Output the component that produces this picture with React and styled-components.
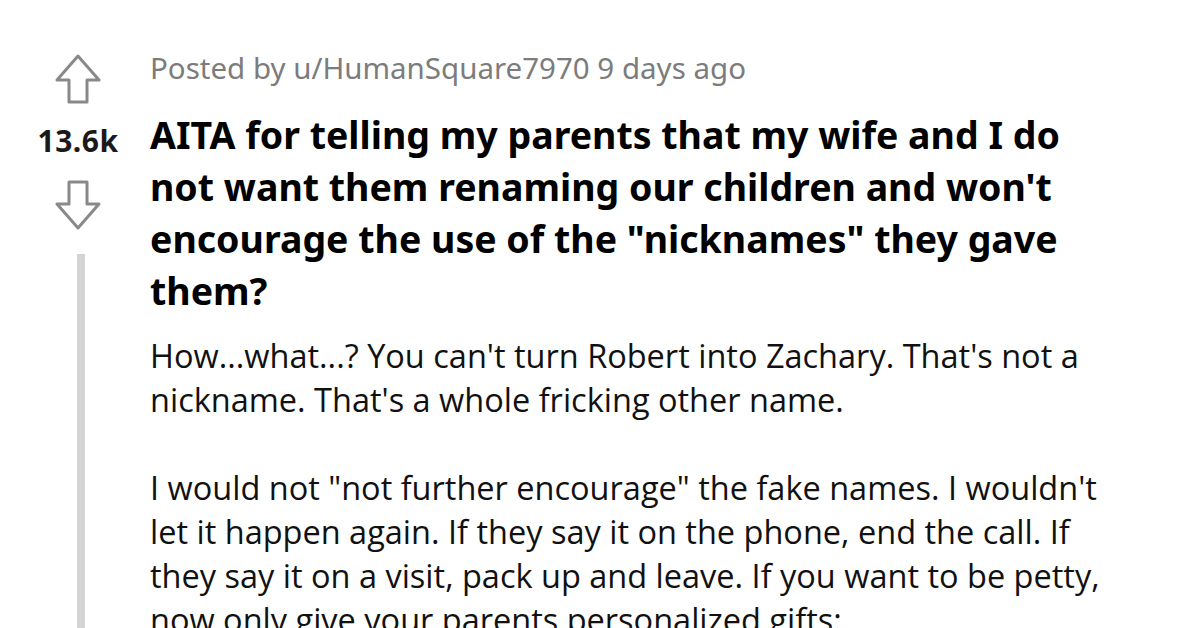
import React from 'react';
import styled, { createGlobalStyle } from 'styled-components';

const GlobalStyle = createGlobalStyle`
  html, body {
    margin: 0;
    padding: 0;
    background: #ffffff;
    height: 628px;
    overflow: hidden;
  }
`;

const Arrow = ({ down }) => (
  <ArrowSvg viewBox="0 0 48 50" $down={down}>
    <path
      d="M24 2 L45 26 L33 26 L33 48 L15 48 L15 26 L3 26 Z"
      fill="none"
      stroke="#898989"
      strokeWidth="3"
      strokeLinejoin="round"
    />
  </ArrowSvg>
);

const App = () => {
  return (
    <>
      <GlobalStyle />
      <Post>
        <VoteColumn>
          <Arrow />
          <Score>13.6k</Score>
          <Arrow down />
          <ThreadLine />
        </VoteColumn>
        <Content>
          <Meta>Posted by u/HumanSquare7970 9 days ago</Meta>
          <Title>
            AITA for telling my parents that my wife and I do not want them renaming our
            children and won't encourage the use of the "nicknames" they gave them?
          </Title>
          <Body>
            <p>
              How...what...? You can't turn Robert into Zachary. That's not a nickname.
              That's a whole fricking other name.
            </p>
            <p>
              I would not "not further encourage" the fake names. I wouldn't let it happen
              again. If they say it on the phone, end the call. If they say it on a visit,
              pack up and leave. If you want to be petty, now only give your parents
              personalized gifts:
            </p>
          </Body>
        </Content>
      </Post>
    </>
  );
};

const Post = styled.div`
  display: flex;
  gap: 14px;
  padding-top: 51px;
  height: 628px;
  box-sizing: border-box;
`;

const VoteColumn = styled.div`
  width: 116px;
  padding-left: 20px;
  padding-top: 3px;
  display: flex;
  flex-direction: column;
  align-items: center;
  flex-shrink: 0;
`;

const ArrowSvg = styled.svg`
  width: 48px;
  height: 50px;
  display: block;
  transform: ${(p) => (p.$down ? 'rotate(180deg)' : 'none')};
`;

const Score = styled.div`
  font-family: "Noto Sans", sans-serif;
  font-weight: 700;
  font-size: 30px;
  line-height: 34px;
  letter-spacing: 0.5px;
  color: #1a1a1b;
  margin: 20px 0 22px;
`;

const ThreadLine = styled.div`
  width: 8px;
  flex: 1;
  background: #d4d4d4;
  margin-top: 24px;
  margin-left: 5px;
`;

const Content = styled.div`
  width: 960px;
  display: flex;
  flex-direction: column;
`;

const Meta = styled.div`
  font-family: "Noto Sans", sans-serif;
  font-size: 29.5px;
  line-height: 34px;
  color: #7c7c7c;
`;

const Title = styled.h1`
  font-family: "Noto Sans", sans-serif;
  font-weight: 700;
  font-size: 37.5px;
  line-height: 52px;
  color: #000000;
  margin: 24px 0 0;
`;

const Body = styled.div`
  font-family: "Open Sans", sans-serif;
  font-size: 32.5px;
  line-height: 44px;
  color: #111111;
  margin-top: 17px;

  p {
    margin: 0 0 44px;
  }
`;

export default App;
